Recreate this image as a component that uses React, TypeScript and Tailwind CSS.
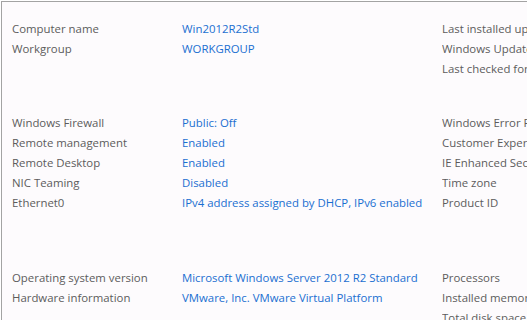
const sections = [
  {
    rows: [
      ['Computer name', 'Win2012R2Std'],
      ['Workgroup', 'WORKGROUP'],
    ],
    side: ['Last installed updates', 'Windows Update', 'Last checked for updates'],
    className: 'pt-[17px]',
  },
  {
    rows: [
      ['Windows Firewall', 'Public: Off'],
      ['Remote management', 'Enabled'],
      ['Remote Desktop', 'Enabled'],
      ['NIC Teaming', 'Disabled'],
      ['Ethernet0', 'IPv4 address assigned by DHCP, IPv6 enabled'],
    ],
    side: [
      'Windows Error Reporting',
      'Customer Experience Improvement Program',
      'IE Enhanced Security Configuration',
      'Time zone',
      'Product ID',
    ],
    className: 'mt-[34px]',
  },
  {
    rows: [
      ['Operating system version', 'Microsoft Windows Server 2012 R2 Standard'],
      ['Hardware information', 'VMware, Inc. VMware Virtual Platform'],
    ],
    side: ['Processors', 'Installed memory (RAM)', 'Total disk space'],
    className: 'mt-[55px]',
  },
];

export default function App() {
  return (
    <div className="h-[320px] w-[527px] overflow-hidden bg-white pl-px pt-px">
      <div
        className="h-full border-l border-t border-[#a3a3a3] bg-[#fdfbfd] text-[11.4px] leading-[20px]"
        style={{ fontFamily: '"Open Sans", "Noto Sans", sans-serif' }}
      >
        {sections.map((s, i) => (
          <div key={i} className={`flex pl-[10px] ${s.className}`}>
            <div className="w-[170px] shrink-0 text-[#5c5c5c]">
              {s.rows.map((r) => (
                <div key={r[0]} className="whitespace-nowrap">{r[0]}</div>
              ))}
            </div>
            <div className="w-[260px] shrink-0 text-[#1b6fd1]">
              {s.rows.map((r) => (
                <div key={r[0]} className="whitespace-nowrap">{r[1]}</div>
              ))}
            </div>
            <div className="min-w-0 flex-1 overflow-hidden text-[#5c5c5c]">
              {s.side.map((t) => (
                <div key={t} className="whitespace-nowrap">{t}</div>
              ))}
            </div>
          </div>
        ))}
      </div>
    </div>
  );
}
